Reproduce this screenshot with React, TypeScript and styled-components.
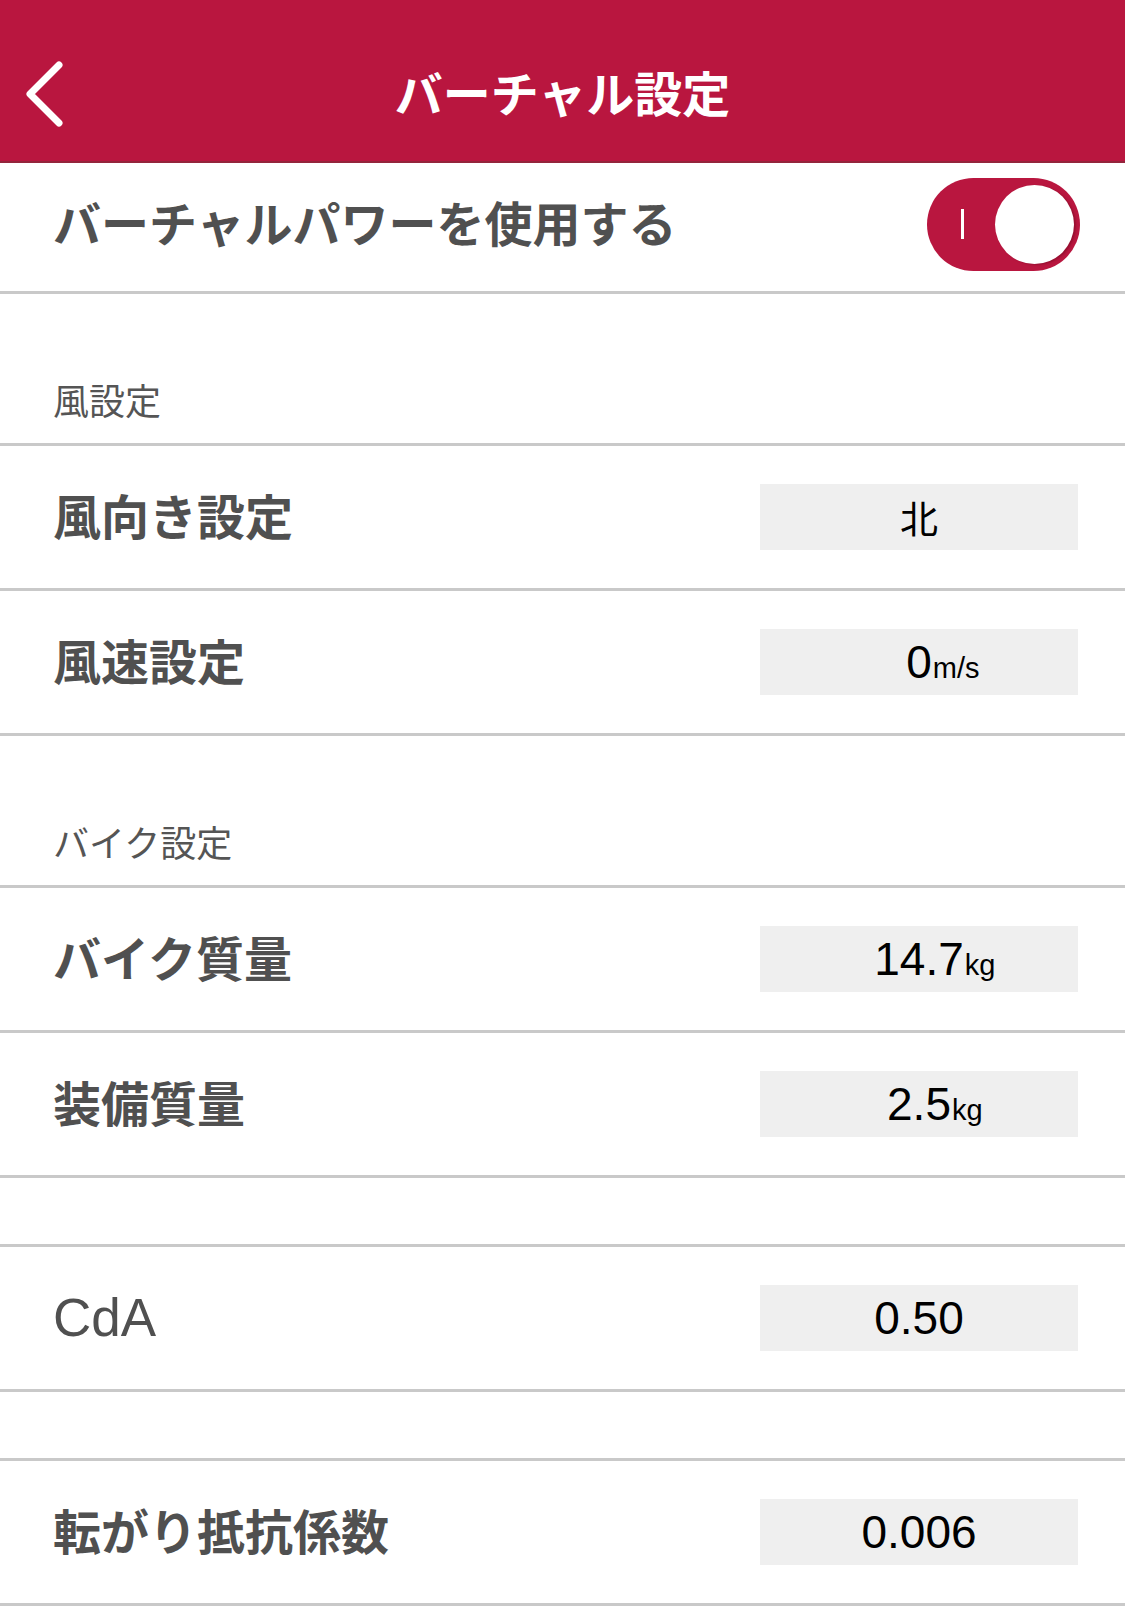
import React from "react";
import styled, { createGlobalStyle } from "styled-components";

const GlobalStyle = createGlobalStyle`
  html, body { margin: 0; padding: 0; background: #ffffff; }
  body { font-family: "Noto Sans CJK JP", "Noto Sans", sans-serif; }
`;

const Page = styled.div`
  width: 1125px;
  background: #ffffff;
`;

const Header = styled.header`
  height: 134px;
  padding-top: 27px;
  background: #b9163f;
  border-bottom: 2px solid #93243b;
  display: grid;
  grid-template-columns: 1fr auto 1fr;
  align-items: center;
`;

const BackButton = styled.button`
  justify-self: start;
  margin-left: 22px;
  padding: 0;
  border: 0;
  background: transparent;
  display: flex;
  align-items: center;
  cursor: pointer;
`;

const Title = styled.h1`
  margin: 0;
  padding-bottom: 7px;
  font-family: "Noto Sans CJK JP", sans-serif;
  font-weight: 700;
  font-size: 48px;
  line-height: 1;
  color: #ffffff;
`;

const Row = styled.div`
  height: 142px;
  border-bottom: 3px solid #c9c9c9;
  display: flex;
  align-items: center;
  justify-content: space-between;
  padding: 0 47px 0 53px;
`;

const ToggleRow = styled(Row)`
  height: 122px;
  padding: 0 45px 6px 53px;
`;

const Label = styled.span<{ $latin?: boolean }>`
  padding-bottom: ${(p) => (p.$latin ? 2 : 6)}px;
  font-family: ${(p) =>
    p.$latin
      ? '"Liberation Sans", Arial, sans-serif'
      : '"Noto Sans CJK JP", sans-serif'};
  font-weight: ${(p) => (p.$latin ? 400 : 700)};
  font-size: ${(p) => (p.$latin ? 53 : 48)}px;
  line-height: 1;
  color: #505050;
`;

const SectionHeader = styled.div`
  height: 152px;
  box-sizing: border-box;
  border-bottom: 3px solid #c9c9c9;
  display: flex;
  align-items: flex-end;
  padding: 0 53px 22px;
  font-family: "Noto Sans CJK JP", sans-serif;
  font-size: 36px;
  font-weight: 400;
  line-height: 1.2;
  color: #555555;
`;

const Spacer = styled.div`
  height: 66px;
  border-bottom: 3px solid #c9c9c9;
`;

const ValueBox = styled.div`
  width: 318px;
  height: 66px;
  background: #efefef;
  display: grid;
  grid-template-columns: 1fr auto 1fr;
  align-content: center;
  align-items: baseline;
`;

const Num = styled.span<{ $cjk?: boolean }>`
  grid-column: 2;
  font-family: ${(p) =>
    p.$cjk
      ? '"Noto Sans CJK JP", sans-serif'
      : '"Liberation Sans", Arial, sans-serif'};
  font-size: ${(p) => (p.$cjk ? 38 : 46)}px;
  font-weight: 400;
  line-height: 1;
  color: #000000;
`;

const Unit = styled.span`
  grid-column: 3;
  justify-self: start;
  margin-left: 1px;
  font-family: "Liberation Sans", Arial, sans-serif;
  font-size: 29px;
  line-height: 1;
  color: #000000;
`;

const Track = styled.div<{ $on: boolean }>`
  width: 153px;
  height: 93px;
  box-sizing: border-box;
  border-radius: 47px;
  background: ${(p) => (p.$on ? "#b9163f" : "#e5e5e5")};
  display: flex;
  align-items: center;
  padding: 0 6px 0 34px;
`;

const OnMark = styled.span`
  width: 3px;
  height: 30px;
  background: #ffffff;
`;

const Knob = styled.span`
  margin-left: auto;
  width: 79px;
  height: 79px;
  border-radius: 50%;
  background: #ffffff;
  box-shadow: 2px 1px 2px rgba(90, 0, 20, 0.35);
`;

const ChevronLeft = () => (
  <svg width="44" height="70" viewBox="0 0 44 70" fill="none">
    <path
      d="M37 6 L8 35 L37 64"
      stroke="#ffffff"
      strokeWidth="7"
      strokeLinecap="round"
      strokeLinejoin="round"
    />
  </svg>
);

type Item = {
  label: string;
  value: string;
  unit?: string;
  cjk?: boolean;
  latin?: boolean;
};

const ValueRow = ({ item }: { item: Item }) => (
  <Row>
    <Label $latin={item.latin}>{item.label}</Label>
    <ValueBox>
      <Num $cjk={item.cjk}>{item.value}</Num>
      {item.unit && <Unit>{item.unit}</Unit>}
    </ValueBox>
  </Row>
);

export default function App() {
  return (
    <Page>
      <GlobalStyle />
      <Header>
        <BackButton aria-label="戻る">
          <ChevronLeft />
        </BackButton>
        <Title>バーチャル設定</Title>
        <span />
      </Header>

      <ToggleRow>
        <Label>バーチャルパワーを使用する</Label>
        <Track $on>
          <OnMark />
          <Knob />
        </Track>
      </ToggleRow>

      <SectionHeader>風設定</SectionHeader>
      <ValueRow item={{ label: "風向き設定", value: "北", cjk: true }} />
      <ValueRow item={{ label: "風速設定", value: "0", unit: "m/s" }} />

      <SectionHeader>バイク設定</SectionHeader>
      <ValueRow item={{ label: "バイク質量", value: "14.7", unit: "kg" }} />
      <ValueRow item={{ label: "装備質量", value: "2.5", unit: "kg" }} />

      <Spacer />
      <ValueRow item={{ label: "CdA", value: "0.50", latin: true }} />

      <Spacer />
      <ValueRow item={{ label: "転がり抵抗係数", value: "0.006" }} />
    </Page>
  );
}
